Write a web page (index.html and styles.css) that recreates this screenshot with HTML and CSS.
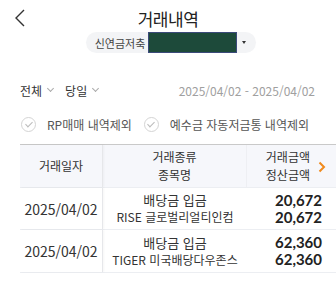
FILE: index.html
```html
<!DOCTYPE html>
<html lang="ko">
<head>
    <meta charset="UTF-8">
    <meta name="viewport" content="width=device-width, initial-scale=1.0">
    <title>거래내역</title>
    <link rel="stylesheet" href="styles.css">
</head>
<body>
    <div class="page">
        <div class="top-bar">
            <div class="back-btn">
                <svg width="12" height="18" viewBox="0 0 12 18"><path d="M10 1 L2 9 L10 17" fill="none" stroke="#333" stroke-width="1.4"/></svg>
            </div>
            <h1 class="title">거래내역</h1>
            <div></div>
        </div>
        <div class="account-row">
            <div class="account-pill">
                <span class="account-name">신연금저축</span>
                <span class="account-mask"></span>
                <span class="caret"></span>
            </div>
        </div>

        <div class="filter-row">
            <div class="filter-left">
                <span class="filter">전체 <span class="chev"></span></span>
                <span class="filter">당일 <span class="chev"></span></span>
            </div>
            <div class="date-range">2025/04/02 - 2025/04/02</div>
        </div>

        <div class="check-row">
            <label class="check"><span class="circle"></span>RP매매 내역제외</label>
            <label class="check"><span class="circle"></span>예수금 자동저금통 내역제외</label>
        </div>

        <div class="table">
            <div class="row head">
                <div class="cell c-date">거래일자</div>
                <div class="cell c-type">
                    <div>거래종류</div>
                    <div>종목명</div>
                </div>
                <div class="cell c-amt">
                    <div>거래금액</div>
                    <div>정산금액</div>
                    <svg class="more" width="8" height="12" viewBox="0 0 8 12"><path d="M1.5 1.5 L6 6 L1.5 10.5" fill="none" stroke="#f08a1c" stroke-width="2"/></svg>
                </div>
            </div>
            <div class="row">
                <div class="cell c-date">2025/04/02</div>
                <div class="cell c-type">
                    <div class="kind">배당금 입금</div>
                    <div class="stock">RISE 글로벌리얼티인컴</div>
                </div>
                <div class="cell c-amt">
                    <div class="num">20,672</div>
                    <div class="num">20,672</div>
                </div>
            </div>
            <div class="row last">
                <div class="cell c-date">2025/04/02</div>
                <div class="cell c-type">
                    <div class="kind">배당금 입금</div>
                    <div class="stock">TIGER 미국배당다우존스</div>
                </div>
                <div class="cell c-amt">
                    <div class="num">62,360</div>
                    <div class="num">62,360</div>
                </div>
            </div>
        </div>
    </div>
</body>
</html>
```

FILE: styles.css
```css
body {
    margin: 0;
    background-color: #fff;
    font-family: "Noto Sans CJK KR", "Noto Sans", sans-serif;
    color: #222;
}
.page {
    width: 336px;
    height: 286px;
    overflow: hidden;
}
.top-bar {
    display: grid;
    grid-template-columns: 1fr auto 1fr;
    align-items: center;
    height: 26px;
    padding-top: 5px;
}
.back-btn {
    padding-left: 14px;
    display: flex;
}
.title {
    margin: 0;
    font-size: 17px;
    font-weight: 400;
    color: #222;
    letter-spacing: -0.5px;
}
.account-row {
    display: flex;
    justify-content: center;
    padding-top: 1px;
    padding-left: 6px;
}
.account-pill {
    display: flex;
    align-items: center;
    height: 21px;
    padding: 0 10px 0 9px;
    background-color: #f3f4f6;
    border-radius: 11px;
}
.account-name {
    font-size: 11px;
    color: #444;
}
.account-mask {
    width: 89px;
    height: 21px;
    margin-left: 3px;
    background-color: #1d4a3a;
    border: 1px solid #3b4a7a;
    box-sizing: border-box;
}
.caret {
    margin-left: 5px;
    width: 0;
    height: 0;
    border-left: 2.5px solid transparent;
    border-right: 2.5px solid transparent;
    border-top: 3px solid #333;
}
.filter-row {
    display: flex;
    justify-content: space-between;
    align-items: center;
    padding: 0 21px 0 20px;
    margin-top: 28px;
    height: 18px;
}
.filter-left {
    display: flex;
    gap: 12px;
}
.filter {
    font-size: 12px;
    color: #333;
    display: flex;
    align-items: center;
}
.chev {
    display: inline-block;
    width: 4px;
    height: 4px;
    margin-left: 6px;
    margin-top: -3px;
    border-right: 1px solid #aaa;
    border-bottom: 1px solid #aaa;
    transform: rotate(45deg);
}
.date-range {
    font-size: 12px;
    color: #a0a0a0;
}
.check-row {
    display: flex;
    gap: 12px;
    padding-left: 21px;
    margin-top: 16px;
    height: 18px;
    align-items: center;
}
.check {
    display: flex;
    align-items: center;
    font-size: 12px;
    color: #555;
}
.circle {
    width: 15px;
    height: 15px;
    margin-right: 11px;
    border: 1px solid #d4d4d4;
    border-radius: 50%;
    box-sizing: border-box;
    position: relative;
}
.circle::after {
    content: "";
    position: absolute;
    left: 4.5px;
    top: 2.5px;
    width: 3px;
    height: 6px;
    border-right: 1px solid #bbb;
    border-bottom: 1px solid #bbb;
    transform: rotate(45deg);
}
.table {
    margin-top: 11px;
    margin-left: 20px;
    border-top: 1px solid #c9c9c9;
}
.row {
    display: grid;
    grid-template-columns: 83px 144px 1fr;
    border-bottom: 1px solid #eceef2;
    height: 41px;
}
.row.head {
    height: 42px;
    background-color: #f6f7fb;
}
.row.last {
    height: 42px;
}
.cell {
    display: flex;
    flex-direction: column;
    justify-content: center;
}
.c-date {
    align-items: center;
    font-size: 14px;
    color: #333;
    border-right: 1px solid #e6e7ea;
    box-shadow: 1px 0 2px rgba(0, 0, 0, 0.04);
}
.c-type {
    align-items: center;
}
.c-amt {
    align-items: flex-end;
    padding-right: 14px;
    position: relative;
}
.head .cell {
    font-size: 12px;
    color: #333;
    line-height: 18px;
}
.head .c-type {
    border-right: 1px solid #eeeff3;
}
.head .c-amt {
    padding-right: 26px;
}
.more {
    position: absolute;
    right: 10px;
    top: 16px;
}
.kind {
    font-size: 13px;
    color: #333;
    line-height: 16px;
}
.stock {
    font-size: 12px;
    color: #333;
    line-height: 17px;
}
.num {
    font-size: 15px;
    font-weight: 700;
    color: #222;
    line-height: 17px;
    font-family: "Lato", "Noto Sans", sans-serif;
}
```
